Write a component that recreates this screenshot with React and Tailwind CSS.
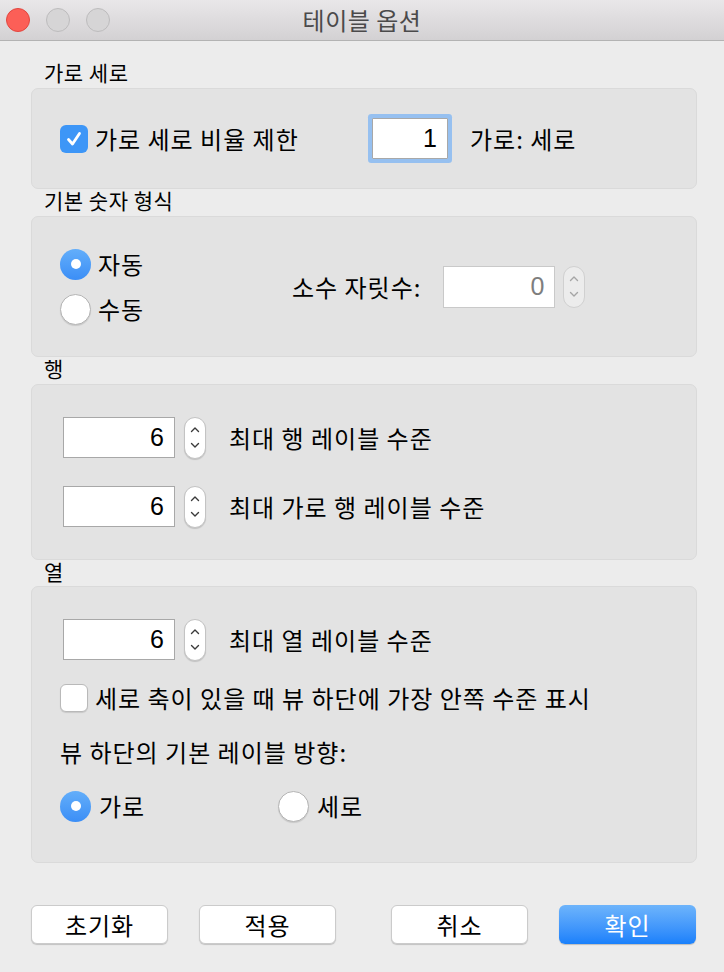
import React, { useState } from 'react';

const FONT = { fontFamily: '"Noto Sans CJK KR", "Noto Sans", sans-serif' };

// 체크 표시
function CheckBox({ checked }) {
  return checked ? (
    <div className="w-[28px] h-[28px] shrink-0 rounded-[6px] bg-[#3d96f7] flex items-center justify-center">
      <svg width="20" height="20" viewBox="0 0 20 20">
        <path d="M4.5 10.5 L8.5 15 L15.5 4.5" fill="none" stroke="white" strokeWidth="2.8" strokeLinecap="round" strokeLinejoin="round" />
      </svg>
    </div>
  ) : (
    <div className="w-[28px] h-[28px] shrink-0 rounded-[6px] bg-white border border-[#b9b9b9] shadow-[0_1px_1px_rgba(0,0,0,0.12)]" />
  );
}

function Radio({ checked }) {
  return checked ? (
    <div className="w-[31px] h-[31px] shrink-0 rounded-full bg-gradient-to-b from-[#63aefa] to-[#3b8ef6] flex items-center justify-center">
      <div className="w-[10px] h-[10px] rounded-full bg-white" />
    </div>
  ) : (
    <div className="w-[31px] h-[31px] shrink-0 rounded-full bg-white border border-[#b4b4b4] shadow-[0_1px_1px_rgba(0,0,0,0.12)]" />
  );
}

function Stepper({ disabled }) {
  const c = disabled ? '#a5a5a5' : '#3a3a3a';
  return (
    <div className={`w-[22px] h-[42px] shrink-0 rounded-full border flex flex-col items-center justify-center gap-[9px] ${disabled ? 'bg-[#ececec] border-[#d0d0d0]' : 'bg-white border-[#c3c3c3] shadow-[0_1px_1px_rgba(0,0,0,0.15)]'}`}>
      <svg width="10" height="7" viewBox="0 0 10 7">
        <path d="M1.5 5.5 L5 2 L8.5 5.5" fill="none" stroke={c} strokeWidth="1.4" strokeLinecap="round" strokeLinejoin="round" />
      </svg>
      <svg width="10" height="7" viewBox="0 0 10 7">
        <path d="M1.5 1.5 L5 5 L8.5 1.5" fill="none" stroke={c} strokeWidth="1.4" strokeLinecap="round" strokeLinejoin="round" />
      </svg>
    </div>
  );
}

function NumField({ value, disabled, className = '' }) {
  return (
    <div
      className={`h-[41px] shrink-0 bg-white border flex items-center justify-end pr-[10px] text-[25px] tracking-normal ${disabled ? 'border-[#c9c9c9] text-[#7e7e7e]' : 'border-[#a8a8a8] text-black'} ${className}`}
      style={{ fontFamily: '"Liberation Sans", Arial, sans-serif' }}
    >
      {value}
    </div>
  );
}

function SectionLabel({ children, h = 'h-[27px]' }) {
  return <div className={`${h} pl-[13px] text-[21px] tracking-[0.5px] leading-[22px] text-black`}>{children}</div>;
}

function Box({ className = '', children }) {
  return (
    <div className={`rounded-[7px] bg-[#e3e3e3] border border-[#dadada] ${className}`}>{children}</div>
  );
}

function Button({ children, primary }) {
  return primary ? (
    <button className="w-[137px] h-[39px] rounded-[6px] bg-gradient-to-b from-[#6db4fb] to-[#1880fb] text-white text-[24px] tracking-[1px] leading-none shadow-[0_1px_1px_rgba(0,0,0,0.2)]">
      {children}
    </button>
  ) : (
    <button className="w-[137px] h-[39px] rounded-[6px] bg-white border border-[#cbcbcb] text-black text-[24px] tracking-[1px] leading-none shadow-[0_1px_1px_rgba(0,0,0,0.18)]">
      {children}
    </button>
  );
}

export default function App() {
  const [lockRatio] = useState(true);
  const txt = 'text-[24px] tracking-[1px] text-black';

  return (
    <div className="w-[724px] h-[972px] bg-[#ececec] overflow-hidden" style={FONT}>
      {/* 타이틀 바 */}
      <div className="relative h-[41px] border-b border-[#b3b3b3] bg-gradient-to-b from-[#e9e7e9] to-[#d3d1d3] flex items-center justify-center">
        <div className="absolute left-[6px] top-[8px] flex gap-[16px]">
          <div className="w-[24px] h-[24px] rounded-full bg-[#fc5f57] border border-[#e2463f]" />
          <div className="w-[24px] h-[24px] rounded-full bg-[#d6d5d6] border border-[#bdbcbd]" />
          <div className="w-[24px] h-[24px] rounded-full bg-[#d6d5d6] border border-[#bdbcbd]" />
        </div>
        <span className="text-[24px] tracking-[0.5px] text-[#4b4a4b]">테이블 옵션</span>
      </div>

      <div className="pl-[31px] pr-[27px] pt-[20px]">
        {/* 가로 세로 */}
        <SectionLabel>가로 세로</SectionLabel>
        <Box className="h-[101px] flex items-center pl-[28px]">
          <div className="w-[312px] flex items-center gap-[7px]">
            <CheckBox checked={lockRatio} />
            <span className={txt}>가로 세로 비율 제한</span>
          </div>
          <NumField value="1" className="w-[76px] h-[40px] shadow-[0_0_0_4px_#96c0f0] rounded-[1px]" />
          <span className={`ml-[22px] ${txt}`}>가로: 세로</span>
        </Box>

        {/* 기본 숫자 형식 */}
        <SectionLabel>기본 숫자 형식</SectionLabel>
        <Box className="h-[141px] flex items-center pl-[28px]">
          <div className="w-[232px] flex flex-col gap-[9px]">
            <div className="flex items-center gap-[7px]">
              <Radio checked />
              <span className={txt}>자동</span>
            </div>
            <div className="flex items-center gap-[7px]">
              <Radio />
              <span className={txt}>수동</span>
            </div>
          </div>
          <span className={txt}>소수 자릿수:</span>
          <NumField value="0" disabled className="ml-[22px] w-[112px] h-[42px]" />
          <div className="ml-[8px]">
            <Stepper disabled />
          </div>
        </Box>

        {/* 행 */}
        <SectionLabel>행</SectionLabel>
        <Box className="h-[176px] flex flex-col justify-center gap-[27px] pl-[31px]">
          <div className="flex items-center">
            <NumField value="6" className="w-[112px]" />
            <div className="ml-[9px]"><Stepper /></div>
            <span className={`ml-[23px] ${txt}`}>최대 행 레이블 수준</span>
          </div>
          <div className="flex items-center">
            <NumField value="6" className="w-[112px]" />
            <div className="ml-[9px]"><Stepper /></div>
            <span className={`ml-[23px] ${txt}`}>최대 가로 행 레이블 수준</span>
          </div>
        </Box>

        {/* 열 */}
        <SectionLabel h="h-[26px]">열</SectionLabel>
        <Box className="h-[277px] pl-[28px] pt-[32px]">
          <div className="h-[41px] flex items-center pl-[3px]">
            <NumField value="6" className="w-[112px]" />
            <div className="ml-[9px]"><Stepper /></div>
            <span className={`ml-[23px] ${txt}`}>최대 열 레이블 수준</span>
          </div>
          <div className="mt-[24px] h-[28px] flex items-center gap-[7px]">
            <CheckBox />
            <span className={txt}>세로 축이 있을 때 뷰 하단에 가장 안쪽 수준 표시</span>
          </div>
          <div className={`mt-[26px] h-[28px] flex items-center ${txt}`}>
            뷰 하단의 기본 레이블 방향:
          </div>
          <div className="mt-[24px] h-[32px] flex items-center">
            <div className="w-[218px] flex items-center gap-[8px]">
              <Radio checked />
              <span className={txt}>가로</span>
            </div>
            <div className="flex items-center gap-[8px]">
              <Radio />
              <span className={txt}>세로</span>
            </div>
          </div>
        </Box>

        {/* 버튼 */}
        <div className="mt-[42px] flex">
          <Button>초기화</Button>
          <div className="ml-[31px]"><Button>적용</Button></div>
          <div className="ml-[55px]"><Button>취소</Button></div>
          <div className="ml-[31px]"><Button primary>확인</Button></div>
        </div>
      </div>
    </div>
  );
}
